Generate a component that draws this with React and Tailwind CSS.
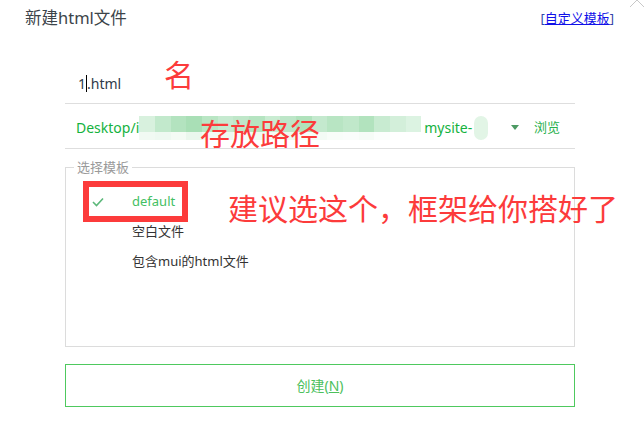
import React from "react";

const FONT = { fontFamily: '"Noto Sans", "Noto Sans CJK SC", sans-serif' };

const mosaicTop = [
  "bg-[#d8f1de]", "bg-[#c2e9cc]", "bg-[#b3e3bf]", "bg-[#a9dfb6]", "bg-[#b9e6c4]",
  "bg-[#c6ead0]", "bg-[#bfe7c9]", "bg-[#b5e4c1]", "bg-[#c9ecd2]", "bg-[#bde6c8]",
  "bg-[#b0e2bc]", "bg-[#c4e9ce]", "bg-[#b8e5c3]", "bg-[#c0e8ca]", "bg-[#b2e3be]",
  "bg-[#c8ebd1]", "bg-[#d3efda]", "bg-[#dcf3e2]",
];
const mosaicBottom = [
  "bg-[#f1faf3]", "bg-[#eef9f1]", "bg-[#f4fbf5]", "bg-[#eaf7ed]", "bg-[#f3fbf4]",
  "bg-[#eef9f1]", "bg-[#f6fcf7]", "bg-[#f0faf2]", "bg-[#f5fbf6]", "bg-[#eef9f0]",
  "bg-[#f7fcf8]", "bg-[#f3fbf5]", "bg-[#f8fdf9]", "bg-[#fafdfb]", "bg-[#f6fcf7]",
  "bg-[#fbfefc]", "bg-white", "bg-white",
];

function Check() {
  return (
    <svg width="12" height="10" viewBox="0 0 12 10">
      <polyline points="1,5 4.5,8.5 11,1.5" fill="none" stroke="#5cb87a" strokeWidth="1.6" />
    </svg>
  );
}

export default function App() {
  return (
    <div className="relative w-[644px] h-[429px] bg-white overflow-hidden" style={FONT}>
      {/* corner chevron */}
      <svg className="absolute right-0 top-0" width="16" height="8" viewBox="0 0 16 8">
        <polyline points="2,7 9,0 16,7" fill="none" stroke="#c8c8c8" strokeWidth="1" />
      </svg>

      {/* header */}
      <div className="flex items-center justify-between pl-[25px] pr-[30px] pt-[8px] h-[28px]">
        <div className="text-[16.5px] leading-[20px] text-[#3c4449]">新建html文件</div>
        <div className="text-[13px] leading-[18px] text-[#3344aa]">
          [<span className="underline text-[#1010e8]">自定义模板</span>]
        </div>
      </div>

      {/* main column */}
      <div className="ml-[65px] w-[510px] mt-[36px]">
        {/* name row */}
        <div className="h-[40px] border-b border-[#dedede] flex items-center pl-[13px] text-[14px] text-[#2f3b4a]">
          <span>1</span>
          <span className="inline-block w-px h-[17px] bg-black"></span>
          <span>.html</span>
        </div>

        {/* path row */}
        <div className="h-[45px] border-b border-[#dedede] flex items-center pl-[11px] pr-[15px] pt-[3px] text-[14px] text-[#14b23e]">
          <span>Desktop/i</span>
          <div className="flex w-[282px] h-[24px]">
            {mosaicTop.map((c, i) => (
              <div key={i} className="flex flex-col flex-1">
                <div className={"h-[16px] " + c}></div>
                <div className={"h-[8px] " + mosaicBottom[i]}></div>
              </div>
            ))}
          </div>
          <span className="ml-[3px]">mysite-</span>
          <div className="w-[14px] h-[24px] rounded-full bg-[#e2f5e6] ml-[2px]"></div>
          <div className="ml-auto flex items-center">
            <svg width="8" height="5" viewBox="0 0 8 5" className="mr-[15px]">
              <polygon points="0,0 8,0 4,5" fill="#4c9a63" />
            </svg>
            <span className="text-[13px] text-[#2ab14d]">浏览</span>
          </div>
        </div>

        {/* template fieldset */}
        <div className="relative mt-[18px] h-[180px] border border-[#dcdcdc]">
          <span className="absolute left-[8px] -top-[9px] bg-white px-[3px] text-[13px] leading-[16px] text-[#9a9a9a]">
            选择模板
          </span>
          <div className="pt-[19px] text-[13px] text-[#333]">
            <div className="flex items-center h-[30px]">
              <div className="w-[66px] pl-[26px] flex items-center">
                <Check />
              </div>
              <span className="text-[#43c063]">default</span>
            </div>
            <div className="flex items-center h-[30px]">
              <div className="w-[66px]"></div>
              <span>空白文件</span>
            </div>
            <div className="flex items-center h-[30px]">
              <div className="w-[66px]"></div>
              <span>包含mui的html文件</span>
            </div>
          </div>
        </div>

        {/* create button */}
        <div className="mt-[17px] h-[43px] border border-[#4ec95e] flex items-center justify-center text-[14px] text-[#4cc05c]">
          创建(<span className="underline">N</span>)
        </div>
      </div>

      {/* red annotations */}
      <div className="absolute left-[83px] top-[181px] w-[105px] h-[41px] border-[6px] border-[#fc3b3b]"></div>
      <div
        className="absolute left-[164px] top-[56px] text-[30px] leading-[34px] text-[#fc3b3b]"
        style={{ fontFamily: '"Noto Sans CJK SC", sans-serif' }}
      >
        名
      </div>
      <div
        className="absolute left-[200px] top-[115px] text-[30px] leading-[34px] text-[#fc3b3b]"
        style={{ fontFamily: '"Noto Sans CJK SC", sans-serif' }}
      >
        存放路径
      </div>
      <div
        className="absolute left-[228px] top-[190px] text-[30px] leading-[34px] text-[#fc3b3b] whitespace-nowrap"
        style={{ fontFamily: '"Noto Sans CJK SC", sans-serif' }}
      >
        建议选这个，框架给你搭好了
      </div>
    </div>
  );
}
